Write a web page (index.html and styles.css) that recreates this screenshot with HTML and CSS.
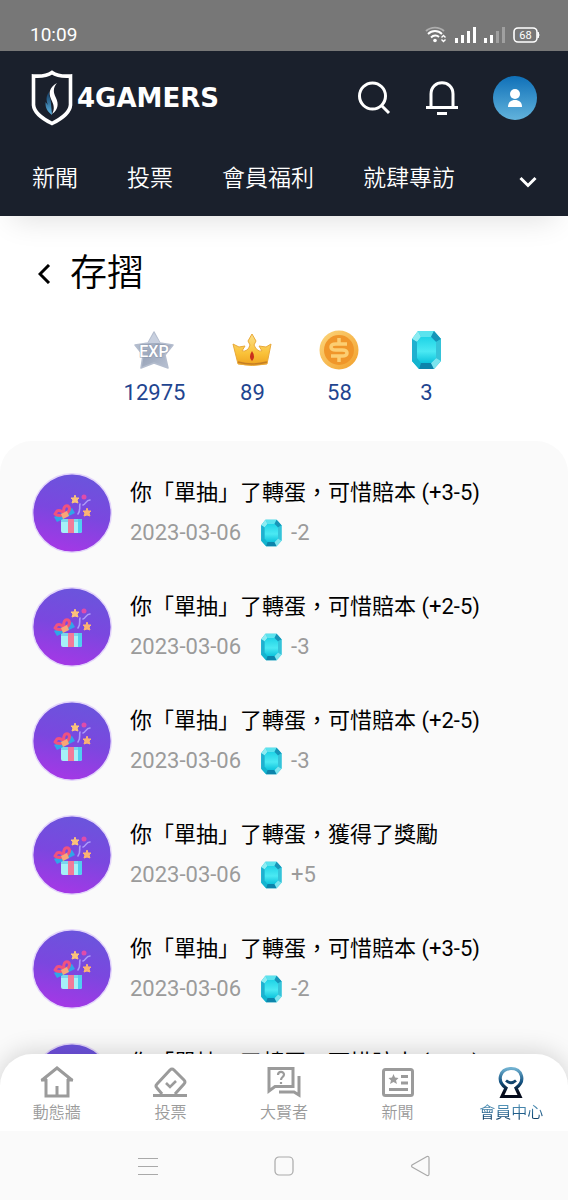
FILE: index.html
```html
<!DOCTYPE html>
<html lang="zh-Hant">
<head>
    <meta charset="UTF-8">
    <meta name="viewport" content="width=device-width, initial-scale=1.0">
    <title>存摺 - 4Gamers</title>
    <link rel="stylesheet" href="styles.css">
</head>
<body>
    <!-- shared icons -->
    <svg class="icon-defs" width="0" height="0" aria-hidden="true">
        <defs>
            <linearGradient id="gemCore" x1="0" y1="0" x2="0" y2="1">
                <stop offset="0" stop-color="#1fd3e6"/>
                <stop offset=".55" stop-color="#4be9f3"/>
                <stop offset="1" stop-color="#0cc3dc"/>
            </linearGradient>
            <linearGradient id="giftBg" x1=".6" y1="0" x2=".35" y2="1">
                <stop offset="0" stop-color="#6a55dc"/>
                <stop offset=".5" stop-color="#7b47df"/>
                <stop offset="1" stop-color="#a637e6"/>
            </linearGradient>
            <linearGradient id="silver" x1="0" y1="0" x2="1" y2="1">
                <stop offset="0" stop-color="#c3ccdc"/>
                <stop offset=".5" stop-color="#9ca7bb"/>
                <stop offset="1" stop-color="#bcc5d6"/>
            </linearGradient>
            <linearGradient id="gold" x1="0" y1="0" x2="0" y2="1">
                <stop offset="0" stop-color="#fbe08a"/>
                <stop offset=".6" stop-color="#fac33a"/>
                <stop offset="1" stop-color="#efa21f"/>
            </linearGradient>
            <linearGradient id="coinRim" x1="0" y1="0" x2="1" y2="1">
                <stop offset="0" stop-color="#fcd67c"/>
                <stop offset="1" stop-color="#f2a02c"/>
            </linearGradient>
            <linearGradient id="member" x1="0" y1="0" x2="0" y2="1">
                <stop offset="0" stop-color="#6fb0d0"/>
                <stop offset=".5" stop-color="#12507f"/>
                <stop offset=".85" stop-color="#050c1c"/>
            </linearGradient>
            <linearGradient id="flame" x1="0" y1="0" x2="0" y2="1">
                <stop offset="0" stop-color="#12395f"/>
                <stop offset="1" stop-color="#5cb4e4"/>
            </linearGradient>
        </defs>
        <symbol id="gem" viewBox="0 0 40 40">
            <path d="M12 1H28L35 9V31L28 39H13L6 31V9Z" fill="#12bfd8"/>
            <path d="M12 1H28L25 7H15Z" fill="#5be3ee"/>
            <path d="M12 1L6 9L11 12L15 7Z" fill="#8cecf2"/>
            <path d="M28 1L35 9L30 12L25 7Z" fill="#1795b8"/>
            <path d="M6 9L11 12V28L6 31Z" fill="#20b0cf"/>
            <path d="M35 9L30 12V28L35 31Z" fill="#35c3d9"/>
            <path d="M6 31L11 28L15 33L13 39Z" fill="#14b4cf"/>
            <path d="M13 39L15 33H25L28 39Z" fill="#0c84ab"/>
            <path d="M28 39L25 33L30 28L35 31Z" fill="#7be4ee"/>
            <path d="M15 7H25L30 12V28L25 33H15L11 28V12Z" fill="url(#gemCore)"/>
        </symbol>
        <symbol id="gift" viewBox="0 0 80 80">
            <circle cx="40" cy="40" r="39.300" fill="url(#giftBg)" stroke="#e3d5fb" stroke-width="1.400"/>
            <path d="M29 46H50V58Q50 60 48 60H31Q29 60 29 58Z" fill="#a5f0f7"/>
            <path d="M46 46H50V58Q50 60 48 60H46Z" fill="#4fcff0"/>
            <path d="M29 46H50V49H29Z" fill="#5cc5e8" opacity=".6"/>
            <path d="M36 46H42V60H36Z" fill="#f27a98"/>
            <path d="M22 44L40 35L43 40L25 49Z" fill="#2fa6e8"/>
            <path d="M25 38C28 36 31 39 33 41C30 43 25 43 23 41ZM32 39C31 35 33 32 36 33C39 35 37 39 34 41Z" fill="none" stroke="#f0527f" stroke-width="3" stroke-linejoin="round"/>
            <path d="M29 41L35 38L37 43L31 46Z" fill="#f9a577"/>
            <path d="M43 22L44 25L47 25L45 27L46 30L43 29L40 30L41 27L39 25L42 25Z" fill="#fbc27b" stroke="#fbc27b"/>
            <path d="M55 35L56 38L59 38L57 40L58 43L55 42L52 43L53 40L51 38L54 38Z" fill="#fbb273" stroke="#fbb273"/>
            <circle cx="52" cy="24" r="2.500" fill="#df4cab"/>
            <path d="M48 31C47 34 49 37 46 41M58 27C54 27 54 31 51 32" fill="none" stroke="#ad9bfa" stroke-width="1.600" stroke-linecap="round"/>
        </symbol>
    </svg>

    <div class="app">
        <div class="status-bar">
            <time>10:09</time>
            <div class="status-icons">
                <svg width="22" height="18" viewBox="0 0 22 18" fill="none" stroke="#fff" stroke-width="1.900">
                    <path d="M1 5C6 .5 14 .5 19 5" opacity=".4"/>
                    <path d="M3 8C7 4 13 4 17 8M6 11.500C8.500 9 12 9 14 11"/>
                    <circle cx="10" cy="14.500" r="1.800" fill="#fff" stroke="none"/>
                    <path d="M16.500 11.500L18.500 9.500L20.500 11.500M16.500 13.500L18.500 15.500L20.500 13.500" stroke-width="1.400"/>
                </svg>
                <svg width="21" height="18" viewBox="0 0 21 18" fill="#fff">
                    <path d="M0 12H3V17H0ZM6 9H9V17H6ZM12 5H15V17H12ZM18 1H21V17H18Z"/>
                </svg>
                <svg width="21" height="18" viewBox="0 0 21 18" fill="#fff">
                    <path d="M0 12H3V17H0ZM6 9H9V17H6Z"/>
                    <path d="M12 5H15V17H12ZM18 1H21V17H18Z" opacity=".3"/>
                </svg>
                <svg width="27" height="16" viewBox="0 0 27 16">
                    <rect x="1" y="1" width="23" height="14" rx="4" fill="none" stroke="#fff" stroke-width="1.600"/>
                    <path d="M25 5Q27 8 25 11Z" fill="#fff" stroke="#fff"/>
                    <text x="12.500" y="12" class="battery-text">68</text>
                </svg>
            </div>
        </div>

        <header class="header">
            <div class="header-top">
                <a href="#" class="logo">
                    <svg width="42" height="56" viewBox="0 0 42 56">
                        <path d="M21 2.500C26 6 33 6.500 39.500 6V35C39 42 30 49 21 53.500C12 49 3 42 2.500 35V6C9 6.500 16 6 21 2.500Z" fill="none" stroke="#fff" stroke-width="3.600"/>
                        <path d="M18 22C18 27 20 29 20 34L21 45C17 42 14 38 14.500 32L17 35C15 30 15 26 18 22Z" fill="url(#flame)"/>
                        <path d="M26 13C19 17 17 22 20 29C23 35 24 39 21 44C27 40 28 34 25 28C22 22 22 18 26 13Z" fill="#fff"/>
                    </svg>
                    <span>4GAMERS</span>
                </a>
                <div class="header-actions">
                    <button type="button" aria-label="搜尋">
                        <svg width="34" height="36" viewBox="0 0 34 36" fill="none" stroke="#fff" stroke-width="3">
                            <circle cx="15.500" cy="16" r="13"/>
                            <path d="M24.500 25.500L32 33"/>
                        </svg>
                    </button>
                    <button type="button" aria-label="通知">
                        <svg width="32" height="36" viewBox="0 0 32 36" fill="none" stroke="#fff" stroke-width="3">
                            <path d="M5 27V14C5 -1 27 -1 27 14V27M0 27.500H32M11 33.500H21"/>
                        </svg>
                    </button>
                    <button type="button" class="avatar" aria-label="會員">
                        <svg width="14" height="18" viewBox="0 0 14 18" fill="#fff">
                            <circle cx="7" cy="5" r="5"/>
                            <path d="M0 18C0 13 3 11 7 11S14 13 14 18Z"/>
                        </svg>
                    </button>
                </div>
            </div>
            <nav class="menu">
                <a href="#">新聞</a>
                <a href="#">投票</a>
                <a href="#">會員福利</a>
                <a href="#">就肆專訪</a>
                <button type="button" aria-label="更多">
                    <svg width="18" height="12" viewBox="0 0 18 12" fill="none" stroke="#fff" stroke-width="3">
                        <path d="M1.500 2L9 9.500L16.500 2"/>
                    </svg>
                </button>
            </nav>
        </header>

        <main class="content">
            <div class="page-title">
                <a href="#" aria-label="返回">
                    <svg width="14" height="20" viewBox="0 0 14 20" fill="none" stroke="#000" stroke-width="3">
                        <path d="M11 1L2 10L11 19"/>
                    </svg>
                </a>
                <h1>存摺</h1>
            </div>

            <ul class="balances">
                <li>
                    <svg width="40" height="40" viewBox="0 0 40 40">
                        <path d="M20 2L26 13L39 15L31 25L34 38L20 33L7 38L9 25L1 15L14 13Z" fill="url(#silver)" stroke="#b4bdce" stroke-width="1.500" stroke-linejoin="round"/>
                        <path d="M20 3L26 13H14Z" fill="#c8d0df"/>
                        <text x="20" y="27" class="exp-text">EXP</text>
                    </svg>
                    <span>12975</span>
                </li>
                <li>
                    <svg width="40" height="40" viewBox="0 0 40 40">
                        <path d="M1 14L7 17L13 16L10 21Q16 22 18 15L16 11L20 4L24 11L22 15Q25 22 30 21L27 16L34 17L39 14L35 34Q20 37 6 34Z" fill="url(#gold)" stroke="#e9a93a" stroke-linejoin="round"/>
                        <path d="M6 32Q20 36 35 32" fill="none" stroke="#c57f25" stroke-width="1.500"/>
                        <path d="M20 21Q24 27 20 31Q16 27 20 21Z" fill="#c92f1c"/>
                    </svg>
                    <span>89</span>
                </li>
                <li>
                    <svg width="40" height="40" viewBox="0 0 40 40">
                        <circle cx="20" cy="20" r="19.500" fill="url(#coinRim)"/>
                        <circle cx="20" cy="20" r="15" fill="#f0962a"/>
                        <path d="M28 14H17Q12 14 12 17T17 20H23Q28 20 28 23T23 26H12M20 8V14M20 26V32" fill="none" stroke="#fcce72" stroke-width="3.500"/>
                    </svg>
                    <span>58</span>
                </li>
                <li>
                    <svg width="40" height="40"><use href="#gem"/></svg>
                    <span>3</span>
                </li>
            </ul>

            <ul class="records">
                <li>
                    <svg class="record-icon" width="80" height="80"><use href="#gift"/></svg>
                    <div class="record-body">
                        <p class="record-title">你「單抽」了轉蛋，可惜賠本 (+3-5)</p>
                        <p class="record-meta"><time>2023-03-06</time><svg width="28" height="28"><use href="#gem"/></svg><span>-2</span></p>
                    </div>
                </li>
                <li>
                    <svg class="record-icon" width="80" height="80"><use href="#gift"/></svg>
                    <div class="record-body">
                        <p class="record-title">你「單抽」了轉蛋，可惜賠本 (+2-5)</p>
                        <p class="record-meta"><time>2023-03-06</time><svg width="28" height="28"><use href="#gem"/></svg><span>-3</span></p>
                    </div>
                </li>
                <li>
                    <svg class="record-icon" width="80" height="80"><use href="#gift"/></svg>
                    <div class="record-body">
                        <p class="record-title">你「單抽」了轉蛋，可惜賠本 (+2-5)</p>
                        <p class="record-meta"><time>2023-03-06</time><svg width="28" height="28"><use href="#gem"/></svg><span>-3</span></p>
                    </div>
                </li>
                <li>
                    <svg class="record-icon" width="80" height="80"><use href="#gift"/></svg>
                    <div class="record-body">
                        <p class="record-title">你「單抽」了轉蛋，獲得了獎勵</p>
                        <p class="record-meta"><time>2023-03-06</time><svg width="28" height="28"><use href="#gem"/></svg><span>+5</span></p>
                    </div>
                </li>
                <li>
                    <svg class="record-icon" width="80" height="80"><use href="#gift"/></svg>
                    <div class="record-body">
                        <p class="record-title">你「單抽」了轉蛋，可惜賠本 (+3-5)</p>
                        <p class="record-meta"><time>2023-03-06</time><svg width="28" height="28"><use href="#gem"/></svg><span>-2</span></p>
                    </div>
                </li>
                <li>
                    <svg class="record-icon" width="80" height="80"><use href="#gift"/></svg>
                    <div class="record-body">
                        <p class="record-title">你「單抽」了轉蛋，可惜賠本 (+3-5)</p>
                    </div>
                </li>
            </ul>
        </main>

        <nav class="tab-bar">
            <a href="#">
                <svg width="34" height="34" viewBox="0 0 34 34" fill="none" stroke="#9b9b9b" stroke-width="3">
                    <path d="M1.500 15.500L17 3L32.500 15.500M1 15H7M27 15H33M6 14V31H28V14M17 21V31"/>
                </svg>
                <span>動態牆</span>
            </a>
            <a href="#">
                <svg width="34" height="34" viewBox="0 0 34 34" fill="none" stroke="#9b9b9b" stroke-width="3">
                    <path d="M0 30.500H34"/>
                    <path d="M9 29L4 23Q2 21 4 19L17 5Q19 3 21 5L31 15Q33 17 31 19L22 29" stroke-linejoin="round"/>
                    <path d="M13 18L17 22L23 16" stroke-width="2.600"/>
                </svg>
                <span>投票</span>
            </a>
            <a href="#">
                <svg width="34" height="34" viewBox="0 0 34 34" fill="none" stroke="#9b9b9b" stroke-width="3">
                    <path d="M2 23V3.500H26V21.500H8L2 26Z"/>
                    <path d="M32 11V30L27 27H12"/>
                    <path d="M11 10C11 6 17 6 17 9.500C17 12 14 12 14 15M14 17V19" stroke-width="2.200"/>
                </svg>
                <span>大賢者</span>
            </a>
            <a href="#">
                <svg width="34" height="34" viewBox="0 0 34 34" fill="none" stroke="#9b9b9b" stroke-width="3">
                    <rect x="2.500" y="4.500" width="29" height="26" rx="2"/>
                    <path d="M20 11.500H27M20 18H27M8 24.500H27"/>
                    <path d="M12.500 9L14 12.500L17.500 13L15 15.500L16 19L12.500 17L9 19L10 15.500L7.500 13L11 12.500Z" fill="#9b9b9b" stroke="none"/>
                </svg>
                <span>新聞</span>
            </a>
            <a href="#" class="active">
                <svg width="34" height="34" viewBox="0 0 34 34" fill="none" stroke="url(#member)" stroke-width="3.200">
                    <path d="M12 23C2 16 6 3.500 17 3.500S32 16 22 23L26 31.500H8L12 23Z"/>
                    <path d="M12 15.500Q17 20 22 15.500" stroke="#12456e" stroke-width="2.800"/>
                </svg>
                <span>會員中心</span>
            </a>
        </nav>

        <div class="system-nav">
            <button type="button" aria-label="選單">
                <svg width="20" height="20" viewBox="0 0 20 20" stroke="#a9a9a9">
                    <path d="M0 2.500H20M0 10.500H20M0 18.500H20"/>
                </svg>
            </button>
            <button type="button" aria-label="主畫面">
                <svg width="20" height="20" viewBox="0 0 20 20" fill="none" stroke="#a9a9a9" stroke-width="1.200">
                    <rect x="1" y="1" width="18" height="18" rx="4"/>
                </svg>
            </button>
            <button type="button" aria-label="返回上一頁">
                <svg width="20" height="22" viewBox="0 0 20 22" fill="none" stroke="#a9a9a9" stroke-width="1.200">
                    <path d="M17 1.500L2 10Q1 11 2 12L17 20.500Q19 21 19 19V3Q19 1 17 1.500Z"/>
                </svg>
            </button>
        </div>
    </div>
</body>
</html>
```
FILE: styles.css
```css
* {
    margin: 0;
    padding: 0;
    box-sizing: border-box;
}

body {
    font-family: Roboto, 'Noto Sans CJK TC', sans-serif;
    background: #fff;
    color: #000;
}

a {
    color: inherit;
    text-decoration: none;
}

button {
    background: none;
    border: none;
    color: inherit;
    cursor: pointer;
}

svg {
    display: block;
    flex-shrink: 0;
}

ul {
    list-style: none;
}

.icon-defs {
    position: absolute;
}

.app {
    height: 100vh;
    display: flex;
    flex-direction: column;
    overflow: hidden;
}

/* status bar */
.status-bar {
    display: flex;
    justify-content: space-between;
    align-items: flex-end;
    flex-shrink: 0;
    height: 51px;
    padding: 0 28px 4px 30px;
    background: #777;
    color: #fff;
    font-size: 19px;
    line-height: 24px;
}

.status-icons {
    display: flex;
    align-items: center;
    gap: 8px;
    height: 24px;
}

.battery-text {
    fill: #fff;
    font-size: 11px;
    text-anchor: middle;
}

/* header */
.header {
    position: relative;
    flex-shrink: 0;
    padding: 0 31px;
    background: #1a202c;
    color: #fff;
    box-shadow: 0 16px 28px -12px rgba(0, 0, 0, 0.12);
}

.header-top {
    display: flex;
    justify-content: space-between;
    align-items: center;
    height: 94px;
}

.logo {
    display: flex;
    align-items: center;
    gap: 4px;
    font-family: 'DejaVu Sans', sans-serif;
    font-size: 26px;
    font-weight: bold;
    line-height: 32px;
}

.header-actions {
    display: flex;
    align-items: center;
    gap: 35px;
}

.avatar {
    display: flex;
    align-items: center;
    justify-content: center;
    width: 44px;
    height: 44px;
    border-radius: 50%;
    background: linear-gradient(#0f70b8, #62b3dc);
}

.menu {
    display: flex;
    align-items: center;
    gap: 49px;
    height: 71px;
    padding: 0 0 10px 1px;
    font-size: 23px;
    font-weight: 350;
}

.menu button {
    margin-left: auto;
    padding-top: 12px;
}

/* content */
.content {
    flex: 1;
    min-height: 0;
    overflow: hidden;
}

.page-title {
    display: flex;
    align-items: center;
    gap: 18px;
    padding: 34px 38px 0;
}

.page-title h1 {
    font-size: 37px;
    font-weight: 350;
    line-height: 48px;
}

.balances {
    display: flex;
    justify-content: center;
    gap: 47px;
    padding: 32px 0 32px 2px;
}

.balances li {
    display: flex;
    flex-direction: column;
    align-items: center;
    gap: 7px;
    color: #1f4590;
    font-size: 22px;
    line-height: 32px;
}

.exp-text {
    fill: #fff;
    stroke: #8d98ad;
    stroke-width: 1px;
    paint-order: stroke;
    font-size: 16px;
    font-weight: 500;
    text-anchor: middle;
}

.records {
    display: flex;
    flex-direction: column;
    gap: 34px;
    min-height: 100%;
    padding: 32px;
    background: #fafafa;
    border-radius: 32px 32px 0 0;
}

.records li {
    display: flex;
    gap: 18px;
}

.record-body {
    font-size: 22px;
    line-height: 40px;
    white-space: nowrap;
}

.record-meta {
    display: flex;
    align-items: center;
    color: #9b9b9b;
}

.record-meta svg {
    margin: 0 6px 0 16px;
}

/* bottom tabs */
.tab-bar {
    position: relative;
    display: flex;
    flex-shrink: 0;
    margin-top: -32px;
    padding: 11px 0 6px;
    background: #fff;
    border-radius: 32px 32px 0 0;
    box-shadow: 0 -2px 24px rgba(0, 0, 0, 0.16);
}

.tab-bar a {
    flex: 1;
    display: flex;
    flex-direction: column;
    align-items: center;
    gap: 2px;
    color: #9b9b9b;
    font-size: 16px;
    font-weight: 350;
    line-height: 24px;
}

.tab-bar .active span {
    background: linear-gradient(#6fb0d0, #12507f 60%, #0a1a33);
    -webkit-background-clip: text;
    background-clip: text;
    color: transparent;
}

.system-nav {
    position: relative;
    display: flex;
    flex-shrink: 0;
    height: 69px;
    padding: 0 14%;
    background: #fafafa;
}

.system-nav button {
    flex: 1;
    display: flex;
    align-items: center;
    justify-content: center;
}
```
